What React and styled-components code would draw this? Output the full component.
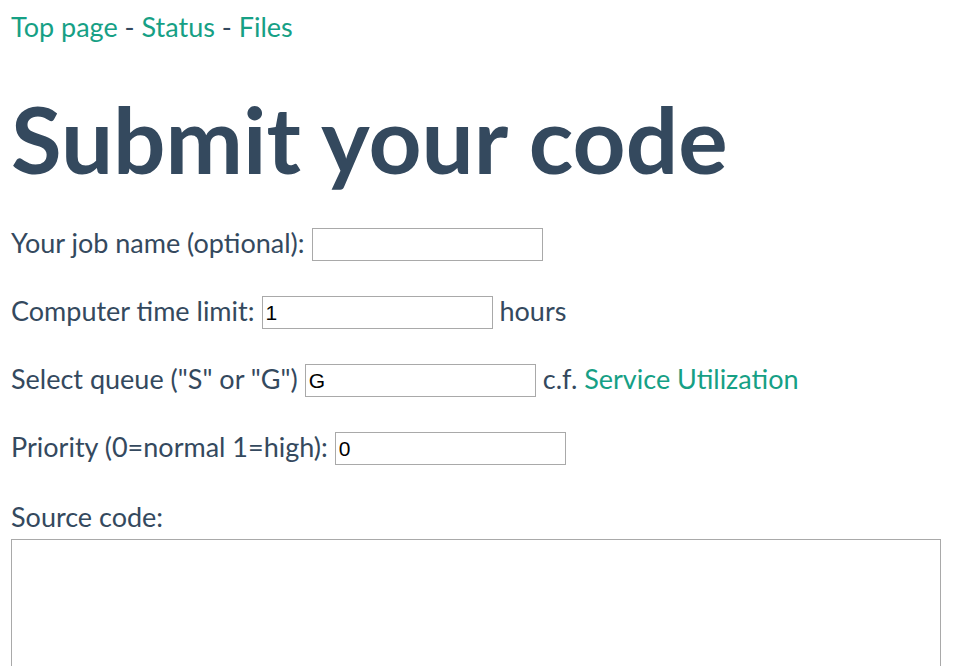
import React from "react";
import styled, { createGlobalStyle } from "styled-components";

const GlobalStyle = createGlobalStyle`
  body {
    margin: 0;
    background: #fff;
    color: #34495e;
    font-family: Lato, "Noto Sans", sans-serif;
    font-size: 27px;
  }
`;

const Page = styled.div`
  padding: 9px 20px 0 11px;
`;

const Nav = styled.nav`
  line-height: 36px;
`;

const Link = styled.a`
  color: #16a085;
  text-decoration: none;
`;

const Title = styled.h1`
  margin: 43px 0 38px;
  font-size: 92.5px;
  font-weight: 700;
  line-height: 1.1;
`;

const Row = styled.div`
  display: flex;
  align-items: center;
  gap: 7px;
  height: 33px;
  margin: 0 0 35px;
  white-space: nowrap;
`;

const Text = styled.span`
  margin-bottom: 3px;
`;

const Field = styled.input`
  box-sizing: border-box;
  width: 231px;
  height: 33px;
  padding: 2px 3px 0;
  border: 1px solid #a9a9a9;
  font-family: "Liberation Sans", Arial, sans-serif;
  font-size: 21px;
  line-height: normal;
  color: #000;
`;

const Label = styled.div`
  margin: 0 0 6px;
  line-height: 33px;
`;

const Source = styled.textarea`
  display: block;
  box-sizing: border-box;
  width: 930px;
  height: 300px;
  border: 1px solid #a9a9a9;
  resize: none;
`;

function App() {
  return (
    <>
      <GlobalStyle />
      <Page>
        <Nav>
          <Link href="#">Top page</Link> - <Link href="#">Status</Link> -{" "}
          <Link href="#">Files</Link>
        </Nav>
        <Title>Submit your code</Title>
        <form>
          <Row>
            <Text>Your job name (optional):</Text>
            <Field defaultValue="" />
          </Row>
          <Row>
            <Text>Computer time limit:</Text>
            <Field defaultValue="1" />
            <Text>hours</Text>
          </Row>
          <Row>
            <Text>Select queue ("S" or "G")</Text>
            <Field defaultValue="G" />
            <Text>
              c.f. <Link href="#">Service Utilization</Link>
            </Text>
          </Row>
          <Row>
            <Text>Priority (0=normal 1=high):</Text>
            <Field defaultValue="0" />
          </Row>
          <Label>Source code:</Label>
          <Source />
        </form>
      </Page>
    </>
  );
}

export default App;
